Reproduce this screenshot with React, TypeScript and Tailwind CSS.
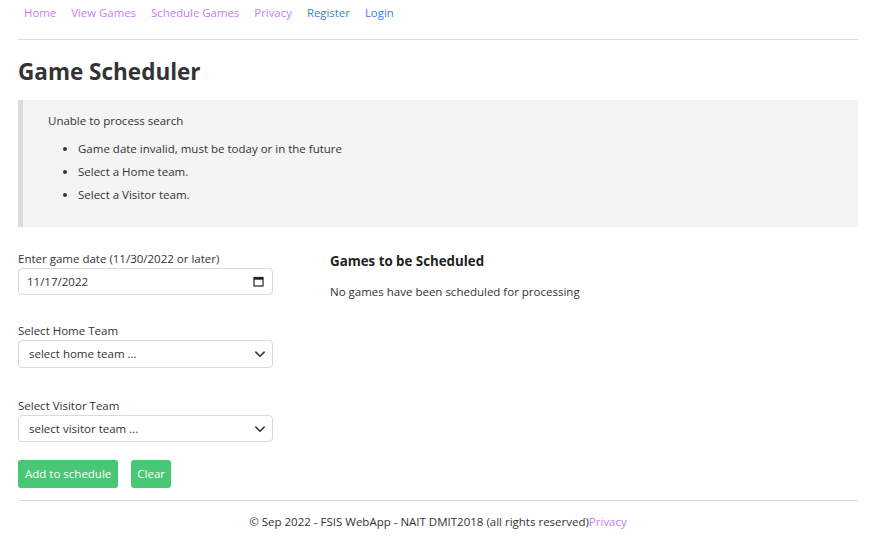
import React from "react";

const font = { fontFamily: '"Open Sans", "Noto Sans", sans-serif' };

function Chevron() {
  return (
    <svg width="12" height="12" viewBox="0 0 16 16" fill="none">
      <path d="M2.5 5.5 8 11l5.5-5.5" stroke="#343a40" strokeWidth="2.2" strokeLinecap="round" strokeLinejoin="round" />
    </svg>
  );
}

function Calendar() {
  return (
    <svg width="11" height="11" viewBox="0 0 11 11" fill="none">
      <rect x="1" y="1.5" width="9" height="8.5" stroke="#222" strokeWidth="1.2" fill="none" />
      <rect x="1" y="1.5" width="9" height="2.2" fill="#222" />
    </svg>
  );
}

export default function App() {
  return (
    <div className="w-[881px] h-[544px] bg-white text-[11.5px] text-[#333]" style={font}>
      <div className="ml-[18px] w-[840px]">
        <nav className="flex h-[26px] items-center gap-[15px] pl-[6px] text-[11.4px]">
          <a className="text-[#c87cf5]">Home</a>
          <a className="text-[#c87cf5]">View Games</a>
          <a className="text-[#c87cf5]">Schedule Games</a>
          <a className="text-[#c87cf5]">Privacy</a>
          <a className="text-[#3d7bf0]">Register</a>
          <a className="text-[#3d7bf0]">Login</a>
        </nav>
        <div className="mt-[13px] h-px bg-[#dcdcdc]" />
        <h1 className="mt-[17px] text-[22.5px] font-bold leading-[30px] text-[#333]">Game Scheduler</h1>
        <div className="mt-[13px] flex h-[127px] border-l-[5px] border-[#dcdcdc] bg-[#f4f4f4]">
          <div className="pl-[25px] pt-[13px] leading-[16px]">
            <p>Unable to process search</p>
            <ul className="mt-[12px] list-disc pl-[30px] flex flex-col gap-[7px]">
              <li>Game date invalid, must be today or in the future</li>
              <li>Select a Home team.</li>
              <li>Select a Visitor team.</li>
            </ul>
          </div>
        </div>
        <div className="mt-[24px] flex">
          <div className="w-[255px]">
            <div className="leading-[16px]">Enter game date (11/30/2022 or later)</div>
            <div className="mt-[1px] flex h-[27px] items-center justify-between rounded-[4px] border border-[#d9d9d9] pl-[8px] pr-[8px]">
              <span>11/17/2022</span>
              <Calendar />
            </div>
            <div className="mt-[28px] leading-[16px]">Select Home Team</div>
            <div className="mt-[1px] flex h-[28px] items-center justify-between rounded-[4px] border border-[#d9d9d9] pl-[10px] pr-[6px]">
              <span>select home team ...</span>
              <Chevron />
            </div>
            <div className="mt-[30px] leading-[16px]">Select Visitor Team</div>
            <div className="mt-[1px] flex h-[27px] items-center justify-between rounded-[4px] border border-[#d9d9d9] pl-[10px] pr-[6px]">
              <span>select visitor team ...</span>
              <Chevron />
            </div>
            <div className="mt-[18px] flex gap-[13px]">
              <button className="h-[28px] rounded-[3px] bg-[#48c774] px-[7px] text-[11.5px] text-white">Add to schedule</button>
              <button className="h-[28px] rounded-[3px] bg-[#48c774] px-[6px] text-[11.5px] text-white">Clear</button>
            </div>
          </div>
          <div className="ml-[57px] pt-[1px]">
            <div className="text-[13.3px] font-bold leading-[18px] text-[#222]">Games to be Scheduled</div>
            <div className="mt-[14px] leading-[16px]">No games have been scheduled for processing</div>
          </div>
        </div>
        <div className="mt-[12px] h-px bg-[#dcdcdc]" />
        <div className="mt-[13px] text-center leading-[16px]">
          © Sep 2022 - FSIS WebApp - NAIT DMIT2018 (all rights reserved)<a className="text-[#c87cf5]">Privacy</a>
        </div>
      </div>
    </div>
  );
}
